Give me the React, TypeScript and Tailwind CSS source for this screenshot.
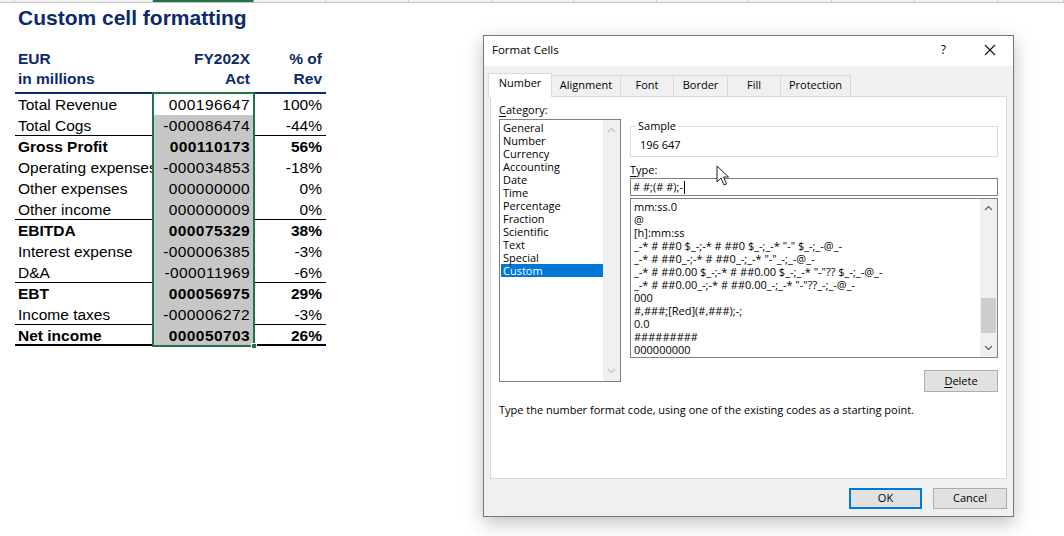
import React from "react";

type Row = { label: string; val: string; pct: string; bold?: boolean; border?: "b1" | "b2" };

const rows: Row[] = [
  { label: "Total Revenue", val: "000196647", pct: "100%" },
  { label: "Total Cogs", val: "-000086474", pct: "-44%", border: "b1" },
  { label: "Gross Profit", val: "000110173", pct: "56%", bold: true },
  { label: "Operating expenses", val: "-000034853", pct: "-18%" },
  { label: "Other expenses", val: "000000000", pct: "0%" },
  { label: "Other income", val: "000000009", pct: "0%", border: "b1" },
  { label: "EBITDA", val: "000075329", pct: "38%", bold: true },
  { label: "Interest expense", val: "-000006385", pct: "-3%" },
  { label: "D&A", val: "-000011969", pct: "-6%", border: "b1" },
  { label: "EBT", val: "000056975", pct: "29%", bold: true },
  { label: "Income taxes", val: "-000006272", pct: "-3%", border: "b1" },
  { label: "Net income", val: "000050703", pct: "26%", bold: true, border: "b2" },
];

const headerCols = [
  "w-[15px]",
  "w-[138px]",
  "w-[101px] border-b-2 border-b-[#217346]",
  "w-[72px]",
  "w-[83px]",
  "w-[83px]",
  "w-[82px]",
  "w-[83px]",
  "w-[92px]",
  "w-[83px]",
  "w-[83px]",
  "w-[83px]",
  "w-[66px]",
];

const categories = [
  "General",
  "Number",
  "Currency",
  "Accounting",
  "Date",
  "Time",
  "Percentage",
  "Fraction",
  "Scientific",
  "Text",
  "Special",
  "Custom",
];

const formats = [
  "mm:ss.0",
  "@",
  "[h]:mm:ss",
  '_-* # ##0 $_-;-* # ##0 $_-;_-* "-" $_-;_-@_-',
  '_-* # ##0_-;-* # ##0_-;_-* "-"_-;_-@_-',
  '_-* # ##0.00 $_-;-* # ##0.00 $_-;_-* "-"?? $_-;_-@_-',
  '_-* # ##0.00_-;-* # ##0.00_-;_-* "-"??_-;_-@_-',
  "000",
  "#,###;[Red](#,###);-;",
  "0.0",
  "#########",
  "000000000",
];

function Chevron({ up, color }: { up?: boolean; color: string }) {
  return (
    <svg width="9" height="6" viewBox="0 0 9 6">
      <polyline
        points={up ? "1,5 4.5,1.5 8,5" : "1,1 4.5,4.5 8,1"}
        fill="none"
        stroke={color}
        strokeWidth="1.2"
      />
    </svg>
  );
}

function Sheet() {
  return (
    <div className="font-['Liberation_Sans',Arial,sans-serif] text-black">
      <div className="flex h-[3px] border-b border-[#c4c4c4] bg-[#f3f3f3]">
        {headerCols.map((c, i) => (
          <div key={i} className={`${c} shrink-0 border-r border-[#d0d0d0]`} />
        ))}
      </div>
      <div className="pl-[15px]">
        <div className="mt-[3px] pl-[3px] text-[21px] leading-[23px] font-bold text-[#0b2a6a]">
          Custom cell formatting
        </div>
        <div className="mt-[21px] w-[311px] grid grid-cols-[138px_101px_72px] text-[15.5px] leading-[20px] font-bold text-[#0b2a6a] pb-[3px] border-b-2 border-[#0b2a6a]">
          <div className="pl-[3px] -mt-px">EUR</div>
          <div className="text-right pr-[4px] -mt-px">FY202X</div>
          <div className="text-right pr-[4px] -mt-px">% of</div>
          <div className="pl-[3px]">in millions</div>
          <div className="text-right pr-[4px]">Act</div>
          <div className="text-right pr-[4px]">Rev</div>
        </div>
        <div className="relative w-[311px]">
          {rows.map((r, i) => (
            <div
              key={i}
              className={`grid grid-cols-[138px_101px_72px] h-[21px] text-[15.5px] leading-[21px] ${
                r.bold ? "font-bold" : ""
              } ${r.border === "b1" ? "border-b border-black" : ""} ${
                r.border === "b2" ? "border-b-2 border-black" : ""
              }`}
            >
              <div className="pl-[3px] overflow-hidden whitespace-nowrap">{r.label}</div>
              <div
                className={`text-right pr-[4px] tracking-[0.4px] ${
                  i === 0 ? "bg-white" : "bg-[#c6c6c6]"
                }`}
              >
                {r.val}
              </div>
              <div className="text-right pr-[4px]">{r.pct}</div>
            </div>
          ))}
          <div className="absolute left-[137px] top-[-2px] w-[103px] h-[255px] border-2 border-[#217346] pointer-events-none">
            <div className="absolute right-[-4px] bottom-[-4px] w-[6px] h-[6px] bg-[#217346] border border-white" />
          </div>
        </div>
      </div>
    </div>
  );
}

function Dialog() {
  const tabs = ["Alignment", "Font", "Border", "Fill", "Protection"];
  const tabW = ["w-[70px]", "w-[54px]", "w-[55px]", "w-[54px]", "w-[71px]"];
  return (
    <div className="absolute left-[483px] top-[35px] w-[531px] h-[482px] border border-[#787878] bg-[#f0f0f0] shadow-[0_6px_18px_rgba(0,0,0,0.25)] flex flex-col font-['Open_Sans',sans-serif] text-[11px] text-black">
      {/* title bar */}
      <div className="h-[30px] bg-white flex items-center pl-[8px] pb-[2px] shrink-0">
        <span className="text-[11.5px]">Format Cells</span>
        <span className="ml-auto mr-[38px] text-[12px]">?</span>
        <svg width="12" height="12" viewBox="0 0 12 12" className="mr-[17px]">
          <line x1="1" y1="1" x2="11" y2="11" stroke="#111" strokeWidth="1.1" />
          <line x1="11" y1="1" x2="1" y2="11" stroke="#111" strokeWidth="1.1" />
        </svg>
      </div>
      {/* tabs */}
      <div className="relative z-10 flex items-end h-[23px] mt-[7px] pl-[4px] shrink-0">
        <div className="w-[64px] h-[24px] bg-white border border-b-0 border-[#d9d9d9] flex items-center justify-center pb-[4px] translate-y-[1px]">
          Number
        </div>
        {tabs.map((t, i) => (
          <div
            key={t}
            className={`${tabW[i]} h-[21px] -ml-px border border-b-0 border-[#d9d9d9] bg-[#f0f0f0] flex items-center justify-center pb-[2px]`}
          >
            {t}
          </div>
        ))}
      </div>
      {/* panel */}
      <div className="ml-[6px] w-[517px] h-[383px] bg-white border border-[#d9d9d9] shrink-0 flex flex-col pl-[8px]">
        <div className="flex gap-[9px] pt-[5px]">
          {/* left column */}
          <div className="w-[122px] flex flex-col">
            <div className="h-[16px] leading-[16px]">
              <u className="underline-offset-2">C</u>ategory:
            </div>
            <div className="mt-[1px] h-[263px] border border-[#7f7f7f] flex">
              <div className="flex-1 pt-[1px] pl-[1px]">
                {categories.map((c) => (
                  <div
                    key={c}
                    className={`h-[13px] leading-[13px] pl-[2px] ${
                      c === "Custom" ? "bg-[#0078d7] text-white" : ""
                    }`}
                  >
                    {c}
                  </div>
                ))}
              </div>
              <div className="w-[17px] bg-[#f0f0f0] flex flex-col items-center justify-between py-[7px]">
                <Chevron up color="#c4c4c4" />
                <Chevron color="#c4c4c4" />
              </div>
            </div>
          </div>
          {/* right column */}
          <div className="w-[368px] flex flex-col pt-[17px]">
            <fieldset className="h-[38px] border border-[#dcdcdc] px-[8px]">
              <legend className="ml-[-3px] px-[2px] leading-[14px]">Sample</legend>
              <div className="mt-[5px] leading-[14px] pl-[1px]">196 647</div>
            </fieldset>
            <div className="mt-[6px] h-[14px] leading-[14px]">
              <u className="underline-offset-2">T</u>ype:
            </div>
            <div className="mt-[1px] h-[18px] border border-[#7f7f7f] flex items-center pl-[2px]">
              <span>#&nbsp;#;(#&nbsp;#);-</span>
              <span className="inline-block w-px h-[13px] bg-black ml-px" />
            </div>
            <div className="mt-[2px] h-[160px] border border-[#828282] flex overflow-hidden">
              <div className="flex-1 pt-[1px] pl-[3px] overflow-hidden">
                {formats.map((f, i) => (
                  <div key={i} className="h-[13px] leading-[13px] whitespace-pre">
                    {f}
                  </div>
                ))}
              </div>
              <div className="w-[17px] bg-[#f0f0f0] flex flex-col items-center pt-[6px] pb-[6px]">
                <Chevron up color="#606060" />
                <div className="mt-[87px] w-[15px] h-[35px] bg-[#cdcdcd]" />
                <div className="mt-auto">
                  <Chevron color="#606060" />
                </div>
              </div>
            </div>
            <div className="flex justify-end mt-[12px]">
              <div className="w-[74px] h-[22px] border border-[#adadad] bg-[#e1e1e1] flex items-center justify-center">
                <span>
                  <u className="underline-offset-2">D</u>elete
                </span>
              </div>
            </div>
          </div>
        </div>
        <div className="mt-[11px] leading-[14px]">
          Type the number format code, using one of the existing codes as a starting point.
        </div>
      </div>
      {/* buttons */}
      <div className="flex justify-end gap-[11px] mt-[9px] mr-[6px]">
        <div className="w-[73px] h-[21px] border-2 border-[#0078d7] bg-[#e1e1e1] flex items-center justify-center">
          OK
        </div>
        <div className="w-[74px] h-[21px] border border-[#adadad] bg-[#e1e1e1] flex items-center justify-center">
          Cancel
        </div>
      </div>
    </div>
  );
}

function Pointer() {
  return (
    <svg
      className="absolute left-[716px] top-[165px]"
      width="14"
      height="22"
      viewBox="0 0 14 22"
    >
      <path
        d="M1 1 L1 17 L5 13 L8 20 L10.5 19 L7.5 12 L12.5 12 Z"
        fill="white"
        stroke="#222"
        strokeWidth="1"
        strokeLinejoin="round"
      />
    </svg>
  );
}

export default function App() {
  return (
    <div className="relative w-[1064px] h-[536px] bg-white overflow-hidden">
      <Sheet />
      <Dialog />
      <Pointer />
    </div>
  );
}
